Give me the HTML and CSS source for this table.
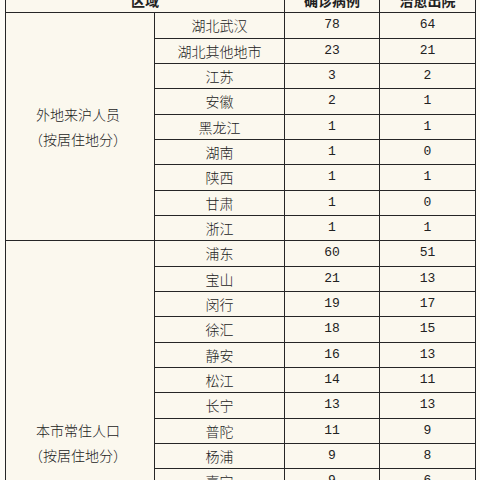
FILE: index.html
```html
<!DOCTYPE html>
<html lang="zh">
<head>
<meta charset="utf-8">
<title>病例统计</title>
<link rel="stylesheet" href="styles.css">
</head>
<body>
<table class="stats">
  <colgroup>
    <col class="c-group">
    <col class="c-area">
    <col class="c-num">
    <col class="c-num2">
  </colgroup>
  <thead>
    <tr>
      <th colspan="2">区域</th>
      <th>确诊病例</th>
      <th>治愈出院</th>
    </tr>
  </thead>
  <tbody>
    <tr><td class="group" rowspan="9">外地来沪人员<br>（按居住地分）</td><td>湖北武汉</td><td class="num">78</td><td class="num">64</td></tr>
    <tr><td>湖北其他地市</td><td class="num">23</td><td class="num">21</td></tr>
    <tr><td>江苏</td><td class="num">3</td><td class="num">2</td></tr>
    <tr><td>安徽</td><td class="num">2</td><td class="num">1</td></tr>
    <tr><td>黑龙江</td><td class="num">1</td><td class="num">1</td></tr>
    <tr><td>湖南</td><td class="num">1</td><td class="num">0</td></tr>
    <tr><td>陕西</td><td class="num">1</td><td class="num">1</td></tr>
    <tr><td>甘肃</td><td class="num">1</td><td class="num">0</td></tr>
    <tr><td>浙江</td><td class="num">1</td><td class="num">1</td></tr>
    <tr><td class="group" rowspan="16">本市常住人口<br>（按居住地分）</td><td>浦东</td><td class="num">60</td><td class="num">51</td></tr>
    <tr><td>宝山</td><td class="num">21</td><td class="num">13</td></tr>
    <tr><td>闵行</td><td class="num">19</td><td class="num">17</td></tr>
    <tr><td>徐汇</td><td class="num">18</td><td class="num">15</td></tr>
    <tr><td>静安</td><td class="num">16</td><td class="num">13</td></tr>
    <tr><td>松江</td><td class="num">14</td><td class="num">11</td></tr>
    <tr><td>长宁</td><td class="num">13</td><td class="num">13</td></tr>
    <tr><td>普陀</td><td class="num">11</td><td class="num">9</td></tr>
    <tr><td>杨浦</td><td class="num">9</td><td class="num">8</td></tr>
    <tr><td>嘉定</td><td class="num">9</td><td class="num">6</td></tr>
    <tr><td>黄浦</td><td class="num">9</td><td class="num">5</td></tr>
    <tr><td>虹口</td><td class="num">7</td><td class="num">5</td></tr>
    <tr><td>青浦</td><td class="num">6</td><td class="num">3</td></tr>
    <tr><td>奉贤</td><td class="num">4</td><td class="num">2</td></tr>
    <tr><td>金山</td><td class="num">4</td><td class="num">3</td></tr>
    <tr><td>崇明</td><td class="num">4</td><td class="num">3</td></tr>
  </tbody>
</table>
</body>
</html>
```

FILE: styles.css
```css
html, body {
  margin: 0;
  padding: 0;
}

body {
  background: #fdfcf6;
  color: #222222;
  font-family: "Noto Sans CJK SC", "Noto Sans", sans-serif;
  font-size: 14px;
  font-weight: 300;
  overflow: hidden;
}

.stats {
  margin: -13px 0 0 5px;
  width: 470px;
  table-layout: fixed;
  border-collapse: collapse;
  background: #fbf8ee;
}

.c-group { width: 149px; }
.c-area { width: 130px; }
.c-num { width: 95px; }
.c-num2 { width: 96px; }

.stats tr {
  height: 25.33px;
}

.stats th,
.stats td {
  border: 1px solid #262626;
  padding: 0;
  text-align: center;
  vertical-align: middle;
  line-height: 18px;
  white-space: nowrap;
}

.stats th {
  font-weight: 700;
}

.stats .group {
  line-height: 25px;
  padding-right: 4px;
}

.stats .num {
  font-family: "Liberation Mono", monospace;
  font-size: 13px;
  font-weight: 400;
}
```
